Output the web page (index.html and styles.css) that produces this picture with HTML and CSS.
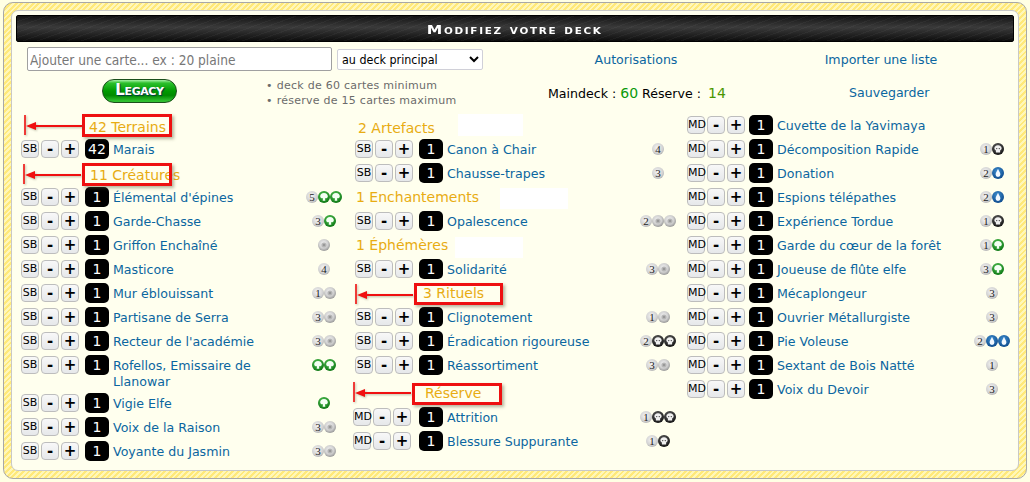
FILE: index.html
```html
<!DOCTYPE html>
<html lang="fr">
<head>
<meta charset="utf-8">
<title>Modifiez votre deck</title>
<link rel="stylesheet" href="styles.css">
</head>
<body>
<svg class="defs" width="0" height="0" aria-hidden="true">
  <defs>
    <radialGradient id="gg" cx="45%" cy="35%" r="70%"><stop offset="0" stop-color="#58c858"/><stop offset="1" stop-color="#06700e"/></radialGradient>
    <radialGradient id="gb" cx="45%" cy="35%" r="70%"><stop offset="0" stop-color="#666"/><stop offset="1" stop-color="#0c0c0c"/></radialGradient>
    <radialGradient id="gu" cx="45%" cy="35%" r="70%"><stop offset="0" stop-color="#3f8fd0"/><stop offset="1" stop-color="#0a4688"/></radialGradient>
    <radialGradient id="gw" cx="45%" cy="40%" r="65%"><stop offset="0" stop-color="#f4f4f4"/><stop offset=".55" stop-color="#d2d2d2"/><stop offset="1" stop-color="#8c8c8c"/></radialGradient>
    <symbol id="g" viewBox="0 0 12 12"><circle cx="6" cy="6" r="6" fill="url(#gg)"/><path d="M6 2C8.3 2 9.8 3.5 9.8 5.2 9.8 6.7 8.5 7.5 7 7.3L7.3 9.8H4.7L5 7.3C3.5 7.5 2.2 6.7 2.2 5.2 2.2 3.5 3.7 2 6 2Z" fill="#f4fff4"/></symbol>
    <symbol id="b" viewBox="0 0 12 12"><circle cx="6" cy="6" r="6" fill="url(#gb)"/><path d="M6 2.2C8.1 2.2 9.6 3.5 9.6 5.3 9.6 6.4 9 7.1 8.1 7.5V9.4H3.9V7.5C3 7.1 2.4 6.4 2.4 5.3 2.4 3.5 3.9 2.2 6 2.2Z" fill="#f0f0f0"/><circle cx="4.7" cy="5.6" r=".7" fill="#444"/><circle cx="7.3" cy="5.6" r=".7" fill="#444"/></symbol>
    <symbol id="u" viewBox="0 0 12 12"><circle cx="6" cy="6" r="6" fill="url(#gu)"/><path d="M6 1.8C6.7 3.8 8.4 5.6 8.4 7.5A2.4 2.4 0 0 1 3.6 7.5C3.6 5.6 5.3 3.8 6 1.8Z" fill="#f2f8ff"/></symbol>
    <symbol id="w" viewBox="0 0 12 12"><circle cx="6" cy="6" r="6" fill="url(#gw)"/><circle cx="6" cy="6" r="2.6" fill="#b8b8b8"/><circle cx="6" cy="6" r="1.3" fill="#989898"/></symbol>
    <symbol id="arrow" viewBox="0 0 58 22"><path d="M1 0V20" stroke="#f01010" stroke-width="1.6" fill="none"/><path d="M10 11H58" stroke="#f01010" stroke-width="1.8" fill="none"/><path d="M2 11L12 7V15Z" fill="#f01010"/></symbol>
  </defs>
</svg>
<main class="panel">
  <div class="inner">
    <h1 class="title"><span class="title-text">Modifiez votre deck</span></h1>
    <div class="toolbar">
      <input class="add" type="text" placeholder="Ajouter une carte... ex : 20 plaine">
      <select class="target"><option>au deck principal</option></select>
      <a class="link link-auth" href="#">Autorisations</a>
      <a class="link link-import" href="#">Importer une liste</a>
    </div>
    <div class="status">
      <div class="status-legacy"><span class="legacy">Legacy</span></div>
      <ul class="rules">
        <li>deck de 60 cartes minimum</li>
        <li>réserve de 15 cartes maximum</li>
      </ul>
      <p class="counts">Maindeck : <b class="ok">60</b> Réserve : <b class="ok-side">14</b></p>
      <a class="link link-save" href="#">Sauvegarder</a>
    </div>
    <div class="deck">
      <section class="col col-1">
        <h2 class="head head-terrains">42 Terrains<i class="box box-terrains"></i><svg class="arrow arrow-terrains"><use href="#arrow"/></svg></h2>
        <div class="row"><div class="ctl"><button>SB</button><button>-</button><button>+</button></div><span class="qty">42</span><a class="name" href="#">Marais</a><span class="cost"></span></div>
        <h2 class="head head-creatures">11 Créatures<i class="box box-creatures"></i><svg class="arrow arrow-creatures"><use href="#arrow"/></svg></h2>
        <div class="row"><div class="ctl"><button>SB</button><button>-</button><button>+</button></div><span class="qty">1</span><a class="name" href="#">Élémental d'épines</a><span class="cost"><span class="num">5</span><svg class="m"><use href="#g"/></svg><svg class="m"><use href="#g"/></svg></span></div>
        <div class="row"><div class="ctl"><button>SB</button><button>-</button><button>+</button></div><span class="qty">1</span><a class="name" href="#">Garde-Chasse</a><span class="cost"><span class="num">3</span><svg class="m"><use href="#g"/></svg></span></div>
        <div class="row"><div class="ctl"><button>SB</button><button>-</button><button>+</button></div><span class="qty">1</span><a class="name" href="#">Griffon Enchaîné</a><span class="cost"><svg class="m"><use href="#w"/></svg></span></div>
        <div class="row"><div class="ctl"><button>SB</button><button>-</button><button>+</button></div><span class="qty">1</span><a class="name" href="#">Masticore</a><span class="cost"><span class="num">4</span></span></div>
        <div class="row"><div class="ctl"><button>SB</button><button>-</button><button>+</button></div><span class="qty">1</span><a class="name" href="#">Mur éblouissant</a><span class="cost"><span class="num">1</span><svg class="m"><use href="#w"/></svg></span></div>
        <div class="row"><div class="ctl"><button>SB</button><button>-</button><button>+</button></div><span class="qty">1</span><a class="name" href="#">Partisane de Serra</a><span class="cost"><span class="num">3</span><svg class="m"><use href="#w"/></svg></span></div>
        <div class="row"><div class="ctl"><button>SB</button><button>-</button><button>+</button></div><span class="qty">1</span><a class="name" href="#">Recteur de l'académie</a><span class="cost"><span class="num">3</span><svg class="m"><use href="#w"/></svg></span></div>
        <div class="row"><div class="ctl"><button>SB</button><button>-</button><button>+</button></div><span class="qty">1</span><a class="name" href="#">Rofellos, Emissaire de Llanowar</a><span class="cost"><svg class="m"><use href="#g"/></svg><svg class="m"><use href="#g"/></svg></span></div>
        <div class="row"><div class="ctl"><button>SB</button><button>-</button><button>+</button></div><span class="qty">1</span><a class="name" href="#">Vigie Elfe</a><span class="cost"><svg class="m"><use href="#g"/></svg></span></div>
        <div class="row"><div class="ctl"><button>SB</button><button>-</button><button>+</button></div><span class="qty">1</span><a class="name" href="#">Voix de la Raison</a><span class="cost"><span class="num">3</span><svg class="m"><use href="#w"/></svg></span></div>
        <div class="row"><div class="ctl"><button>SB</button><button>-</button><button>+</button></div><span class="qty">1</span><a class="name" href="#">Voyante du Jasmin</a><span class="cost"><span class="num">3</span><svg class="m"><use href="#w"/></svg></span></div>
      </section>
      <section class="col col-2">
        <h2 class="head head-artefacts">2 Artefacts<i class="patch patch-artefacts"></i></h2>
        <div class="row"><div class="ctl"><button>SB</button><button>-</button><button>+</button></div><span class="qty">1</span><a class="name" href="#">Canon à Chair</a><span class="cost"><span class="num">4</span></span></div>
        <div class="row"><div class="ctl"><button>SB</button><button>-</button><button>+</button></div><span class="qty">1</span><a class="name" href="#">Chausse-trapes</a><span class="cost"><span class="num">3</span></span></div>
        <h2 class="head head-plain">1 Enchantements<i class="patch patch-ench"></i></h2>
        <div class="row"><div class="ctl"><button>SB</button><button>-</button><button>+</button></div><span class="qty">1</span><a class="name" href="#">Opalescence</a><span class="cost"><span class="num">2</span><svg class="m"><use href="#w"/></svg><svg class="m"><use href="#w"/></svg></span></div>
        <h2 class="head head-plain">1 Éphémères<i class="patch patch-eph"></i></h2>
        <div class="row"><div class="ctl"><button>SB</button><button>-</button><button>+</button></div><span class="qty">1</span><a class="name" href="#">Solidarité</a><span class="cost"><span class="num">3</span><svg class="m"><use href="#w"/></svg></span></div>
        <h2 class="head head-rituels">3 Rituels<i class="box box-rituels"></i><svg class="arrow arrow-rituels"><use href="#arrow"/></svg></h2>
        <div class="row"><div class="ctl"><button>SB</button><button>-</button><button>+</button></div><span class="qty">1</span><a class="name" href="#">Clignotement</a><span class="cost"><span class="num">1</span><svg class="m"><use href="#w"/></svg></span></div>
        <div class="row"><div class="ctl"><button>SB</button><button>-</button><button>+</button></div><span class="qty">1</span><a class="name" href="#">Éradication rigoureuse</a><span class="cost"><span class="num">2</span><svg class="m"><use href="#b"/></svg><svg class="m"><use href="#b"/></svg></span></div>
        <div class="row"><div class="ctl"><button>SB</button><button>-</button><button>+</button></div><span class="qty">1</span><a class="name" href="#">Réassortiment</a><span class="cost"><span class="num">3</span><svg class="m"><use href="#w"/></svg></span></div>
        <h2 class="head head-reserve">Réserve<i class="box box-reserve"></i><svg class="arrow arrow-reserve"><use href="#arrow"/></svg></h2>
        <div class="row"><div class="ctl ctl-md"><button>MD</button><button>-</button><button>+</button></div><span class="qty">1</span><a class="name" href="#">Attrition</a><span class="cost"><span class="num">1</span><svg class="m"><use href="#b"/></svg><svg class="m"><use href="#b"/></svg></span></div>
        <div class="row"><div class="ctl ctl-md"><button>MD</button><button>-</button><button>+</button></div><span class="qty">1</span><a class="name" href="#">Blessure Suppurante</a><span class="cost"><span class="num">1</span><svg class="m"><use href="#b"/></svg></span></div>
      </section>
      <section class="col col-3">
        <div class="row"><div class="ctl"><button>MD</button><button>-</button><button>+</button></div><span class="qty">1</span><a class="name" href="#">Cuvette de la Yavimaya</a><span class="cost"></span></div>
        <div class="row"><div class="ctl"><button>MD</button><button>-</button><button>+</button></div><span class="qty">1</span><a class="name" href="#">Décomposition Rapide</a><span class="cost"><span class="num">1</span><svg class="m"><use href="#b"/></svg></span></div>
        <div class="row"><div class="ctl"><button>MD</button><button>-</button><button>+</button></div><span class="qty">1</span><a class="name" href="#">Donation</a><span class="cost"><span class="num">2</span><svg class="m"><use href="#u"/></svg></span></div>
        <div class="row"><div class="ctl"><button>MD</button><button>-</button><button>+</button></div><span class="qty">1</span><a class="name" href="#">Espions télépathes</a><span class="cost"><span class="num">2</span><svg class="m"><use href="#u"/></svg></span></div>
        <div class="row"><div class="ctl"><button>MD</button><button>-</button><button>+</button></div><span class="qty">1</span><a class="name" href="#">Expérience Tordue</a><span class="cost"><span class="num">1</span><svg class="m"><use href="#b"/></svg></span></div>
        <div class="row"><div class="ctl"><button>MD</button><button>-</button><button>+</button></div><span class="qty">1</span><a class="name" href="#">Garde du cœur de la forêt</a><span class="cost"><span class="num">1</span><svg class="m"><use href="#g"/></svg></span></div>
        <div class="row"><div class="ctl"><button>MD</button><button>-</button><button>+</button></div><span class="qty">1</span><a class="name" href="#">Joueuse de flûte elfe</a><span class="cost"><span class="num">3</span><svg class="m"><use href="#g"/></svg></span></div>
        <div class="row"><div class="ctl"><button>MD</button><button>-</button><button>+</button></div><span class="qty">1</span><a class="name" href="#">Mécaplongeur</a><span class="cost"><span class="num">3</span></span></div>
        <div class="row"><div class="ctl"><button>MD</button><button>-</button><button>+</button></div><span class="qty">1</span><a class="name" href="#">Ouvrier Métallurgiste</a><span class="cost"><span class="num">3</span></span></div>
        <div class="row"><div class="ctl"><button>MD</button><button>-</button><button>+</button></div><span class="qty">1</span><a class="name" href="#">Pie Voleuse</a><span class="cost"><span class="num">2</span><svg class="m"><use href="#u"/></svg><svg class="m"><use href="#u"/></svg></span></div>
        <div class="row"><div class="ctl"><button>MD</button><button>-</button><button>+</button></div><span class="qty">1</span><a class="name" href="#">Sextant de Bois Natté</a><span class="cost"><span class="num">1</span></span></div>
        <div class="row"><div class="ctl"><button>MD</button><button>-</button><button>+</button></div><span class="qty">1</span><a class="name" href="#">Voix du Devoir</a><span class="cost"><span class="num">3</span></span></div>
      </section>
    </div>
  </div>
</main>
</body>
</html>
```

FILE: styles.css
```css
* { box-sizing: border-box; }
html, body { margin: 0; padding: 0; }
body {
  padding: 2px 3px;
  background: #ffffe4;
  font-family: "DejaVu Sans", Verdana, sans-serif;
  font-size: 12.6px;
  color: #000;
}
.defs { position: absolute; }

.panel {
  width: 1024px;
  padding: 7px;
  border: 1px solid #a8a8a8;
  border-radius: 10px;
  background: repeating-linear-gradient(135deg, #ffe97a 0 2px, #fff7b8 2px 4px);
}
.inner {
  padding: 4px 4px 7px;
  border: 1px solid #c8c8c8;
  border-radius: 7px;
  background: #ffffee;
}

.title {
  height: 27px;
  margin: 0;
  border: 1px solid #000;
  border-radius: 2px;
  background:
    repeating-linear-gradient(160deg, rgba(255,255,255,.035) 0 1px, transparent 1px 5px),
    linear-gradient(#141414, #3a3a3a 45%, #1a1a1a 85%, #0c0c0c);
  color: #fff;
  font: bold 12px/28px "DejaVu Sans", sans-serif;
  font-variant: small-caps;
  letter-spacing: 1.3px;
  text-align: center;
}
.title-text { display: inline-block; transform: scaleX(1.3); }

.toolbar {
  display: flex;
  align-items: center;
  height: 24px;
  margin: 5px 0 0 11px;
}
.add {
  width: 305px;
  height: 24px;
  padding: 1px 2px 0;
  border: 1px solid #a0a0a0;
  border-radius: 2px;
  background: #fff;
  font: 13.6px "DejaVu Sans Condensed", "DejaVu Sans", sans-serif;
}
.add::placeholder { color: #777; opacity: 1; }
.target {
  width: 146px;
  height: 21px;
  margin-left: 5px;
  padding: 0;
  border: 1px solid #d0d0d8;
  border-radius: 2px;
  background-color: #fff;
  font: 12.4px "DejaVu Sans Condensed", "DejaVu Sans", sans-serif;
  color: #000;
}
.link { color: #0b66a0; text-decoration: none; font-size: 12.6px; }
.link-auth { width: 306px; text-align: center; }
.link-import { width: 184px; text-align: center; }
.link-save { margin-bottom: 2px; }

.status {
  display: grid;
  grid-template-columns: 239px 282px 301px auto;
  grid-template-rows: 28px;
  align-items: center;
  height: 28px;
  margin: 8px 0 0 11px;
}
.status-legacy { align-self: start; padding-left: 75px; }
.legacy {
  display: block;
  width: 75px;
  height: 24px;
  border: 1px solid #1b4f1b;
  border-radius: 12px;
  background: linear-gradient(#a8f0a8 0, #2cc02c 14%, #009a00 50%, #008a00 70%, #30c030 95%);
  color: #fff;
  font: bold 15px/20px "DejaVu Sans", sans-serif;
  font-variant: small-caps;
  letter-spacing: -.4px;
  text-align: center;
  text-shadow: 1px 1px 1px #034;
}
.rules {
  margin: 0;
  padding: 0;
  list-style: none;
  font-size: 11px;
  line-height: 15px;
  color: #6b6b6b;
  letter-spacing: .25px;
}
.rules li::before { content: "•"; margin-right: 4px; }
.counts { margin: 0; font-size: 12.6px; white-space: nowrap; }
.ok { font-weight: normal; font-size: 14px; color: #0a9a0a; }
.ok-side { margin-left: 3px; font-weight: normal; font-size: 14px; color: #4a9600; }

.deck {
  display: grid;
  grid-template-columns: 334px 332px 325px;
  margin: 6px 0 0 5px;
}
.col { --ctl: 64px; }
.col-1 { padding-right: 11px; }
.col-2 { padding-right: 9px; }
.col-3 { --ctl: 62px; }

.row {
  display: grid;
  grid-template-columns: var(--ctl) 24px 1fr 40px;
  min-height: 24px;
  align-items: start;
}
.ctl { display: flex; gap: 2px; padding-top: 3px; }
.ctl-md { margin-left: -2px; }
.ctl button {
  width: 18px;
  height: 18px;
  padding: 0;
  border: 1px solid #bdbdbd;
  border-radius: 4px;
  background: linear-gradient(#f8f8f8, #e6e8ea);
  color: #000;
  font: 11px/16px "DejaVu Sans", sans-serif;
}
.ctl button + button { font-weight: bold; font-size: 15px; }
.qty {
  height: 20px;
  margin-top: 2px;
  border-radius: 5px;
  background: #000;
  color: #fff;
  font-size: 14px;
  line-height: 21px;
  text-align: center;
}
.name {
  margin-left: 4px;
  padding: 5px 0 1px;
  color: #0b66a0;
  font-size: 12.6px;
  line-height: 16px;
  text-decoration: none;
}
.cost { display: flex; justify-content: center; padding-top: 6px; }
.m { display: block; width: 12px; height: 12px; }
.num {
  width: 12px;
  height: 12px;
  border-radius: 50%;
  background: radial-gradient(circle at 45% 40%, #f6f6f6 0, #d2d2d2 55%, #8c8c8c 100%);
  color: #222;
  font: 11px/12px "Liberation Serif", serif;
  text-align: center;
}

.head {
  position: relative;
  height: 24px;
  margin: 0;
  color: #e8ac12;
  font-size: 14px;
  font-weight: normal;
  line-height: 24px;
  white-space: nowrap;
}
.head-terrains { padding: 2px 0 0 68px; }
.head-creatures { padding: 2px 0 0 69px; }
.head-artefacts { padding: 3px 0 0 3px; }
.head-plain { padding-left: 1px; }
.head-rituels { padding-left: 68px; }
.head-reserve { margin-top: 4px; padding-left: 70px; }

.box {
  position: absolute;
  border: 3px solid #ee1010;
  box-shadow: 2px 2px 3px rgba(90, 90, 60, .45);
}
.box-terrains { left: 61px; top: 1px; width: 90px; height: 23px; }
.box-creatures { left: 61px; top: 2px; width: 90px; height: 23px; }
.box-rituels { left: 59px; top: 2px; width: 89px; height: 22px; }
.box-reserve { left: 57px; top: 2px; width: 90px; height: 22px; }

.arrow {
  position: absolute;
  width: 58px;
  height: 22px;
  filter: drop-shadow(1px 1px 1px rgba(90, 90, 60, .4));
}
.arrow-terrains { left: 3px; top: 2px; }
.arrow-creatures { left: 2px; top: 3px; }
.arrow-rituels { left: 0; top: 3px; }
.arrow-reserve { left: -2px; top: 1px; }

.patch { position: absolute; background: #fff; }
.patch-artefacts { left: 103px; top: 1px; width: 65px; height: 22px; }
.patch-ench { left: 145px; top: 3px; width: 68px; height: 21px; }
.patch-eph { left: 100px; top: 4px; width: 68px; height: 21px; }
```
